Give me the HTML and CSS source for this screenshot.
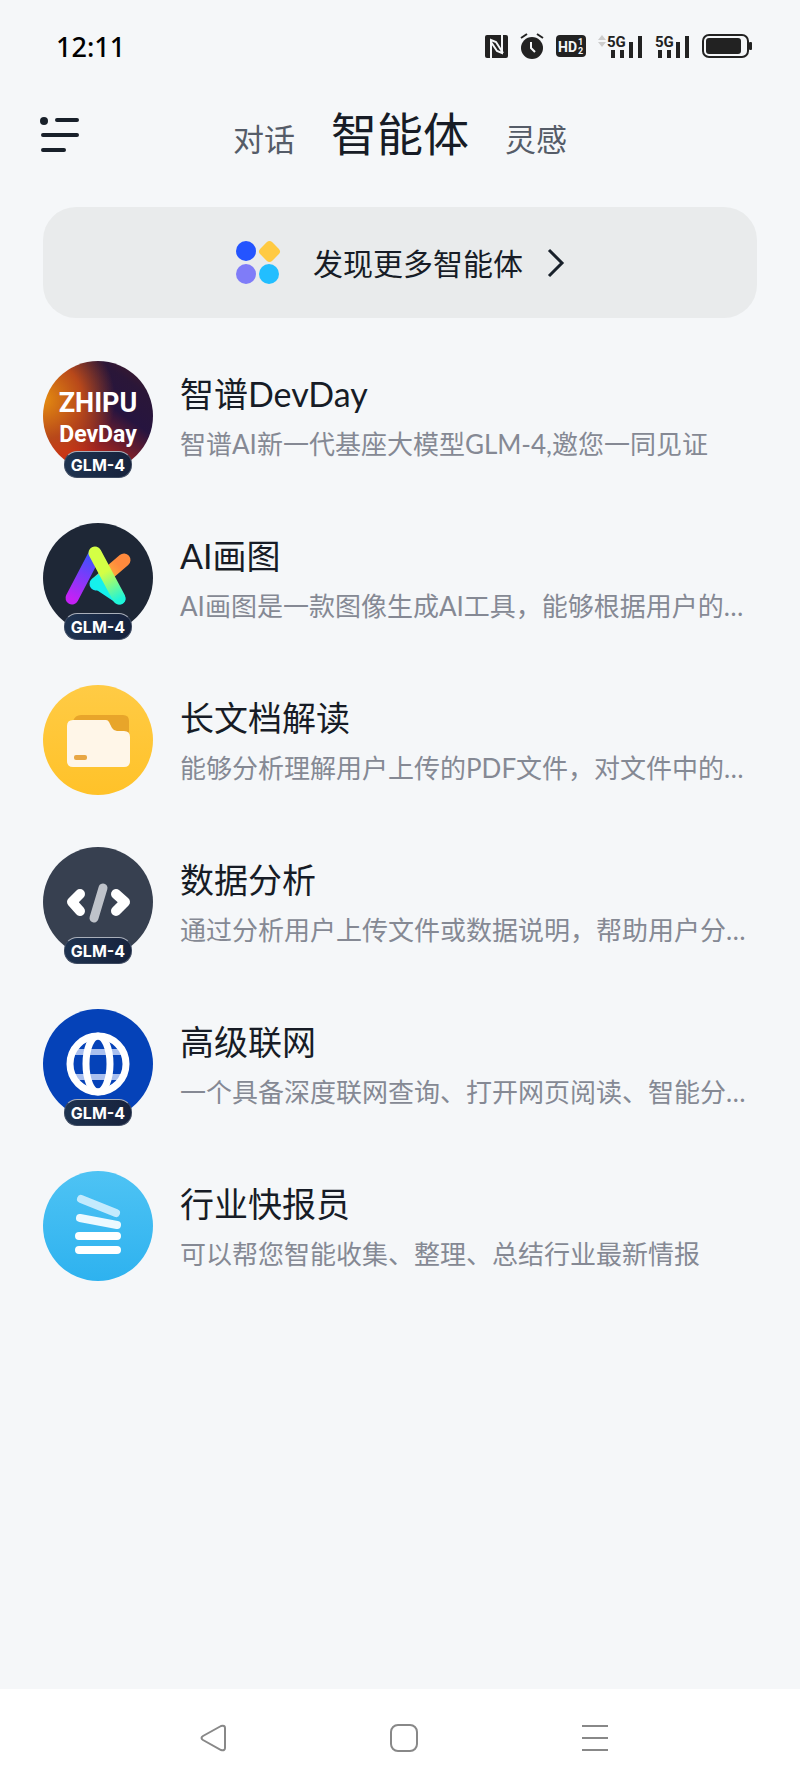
FILE: index.html
```html
<!DOCTYPE html>
<html lang="zh-CN">
  <head>
    <meta charset="utf-8" />
    <meta name="viewport" content="width=device-width, initial-scale=1" />
    <title>智能体</title>
    <link rel="stylesheet" href="styles.css" />
  </head>
  <body>
    <div class="status">
      <span class="time">12:11</span>
      <div class="status-icons">
        <svg class="nfc" width="23" height="23" viewBox="0 0 23 23">
          <rect width="23" height="23" rx="2" fill="#222" />
          <path d="M6 23V5l5 2 7 11M17 0v18l-5-2L6 7" fill="none" stroke="#f5f7f9" stroke-width="2" />
        </svg>
        <svg class="alarm" width="24" height="26" viewBox="0 0 24 26">
          <circle cx="12" cy="15" r="11" fill="#222" />
          <path d="M1 5l6-4M23 5l-6-4" stroke="#222" stroke-width="2" />
          <path d="M11 9v6l4 4" fill="none" stroke="#f5f7f9" stroke-width="2" />
        </svg>
        <svg class="hd" width="30" height="22" viewBox="0 0 30 22">
          <rect width="30" height="22" rx="4" fill="#222" />
          <text x="2" y="17" font-size="14">HD</text>
          <text x="22" y="10" font-size="9">1</text>
          <text x="22" y="19" font-size="9">2</text>
        </svg>
        <svg class="signal-data" width="45" height="27" viewBox="0 0 45 27">
          <path d="M0 7l4-5 4 5zM0 9l4 5 4-5z" fill="#ccc" />
          <text x="9" y="14" font-size="15">5G</text>
          <path d="M15 17v8M24 17v8M33 9v16M42 3v22" />
        </svg>
        <svg class="signal" width="35" height="27" viewBox="0 0 35 27">
          <text x="0" y="14" font-size="15">5G</text>
          <path d="M5 17v8M14 17v8M23 9v16M32 3v22" />
        </svg>
        <svg class="battery" width="50" height="24" viewBox="0 0 50 24">
          <rect x="1" y="1" width="45" height="22" rx="6" fill="none" stroke="#222" stroke-width="2" />
          <rect x="4" y="4" width="35" height="16" rx="3" fill="#222" />
          <rect x="47" y="8" width="3" height="8" rx="1" fill="#222" />
        </svg>
      </div>
    </div>

    <header class="header">
      <button class="menu" aria-label="菜单">
        <svg width="39" height="37" viewBox="0 0 39 37">
          <circle cx="4" cy="5" r="4" fill="#18202a" />
          <path d="M17 4h20M3 19h34M3 34h21" stroke="#18202a" stroke-width="4" stroke-linecap="round" />
        </svg>
      </button>
      <nav class="tabs">
        <a href="#chat">对话</a>
        <a href="#agents" class="active">智能体</a>
        <a href="#ideas">灵感</a>
      </nav>
    </header>

    <main class="main">
      <button class="more">
        <svg width="46" height="46" viewBox="0 0 46 46">
          <circle cx="11" cy="11" r="10" fill="#2454ff" />
          <rect x="26" y="3" width="17" height="17" rx="4" fill="#ffca42" transform="rotate(45 34.500 11.500)" />
          <circle cx="11" cy="34" r="10" fill="#7f7cf8" />
          <circle cx="34" cy="34" r="10" fill="#22beff" />
        </svg>
        <span>发现更多智能体</span>
        <svg width="18" height="30" viewBox="0 0 18 30">
          <path d="M2 2l13 13L2 28" fill="none" stroke="#18202a" stroke-width="3" />
        </svg>
      </button>

      <ul class="list">
        <li class="item">
          <div class="avatar devday">
            <span class="zhipu">ZHIPU</span>
            <span class="day">DevDay</span>
            <span class="badge">GLM-4</span>
          </div>
          <div class="info">
            <h2>智谱DevDay</h2>
            <p>智谱AI新一代基座大模型GLM-4,邀您一同见证</p>
          </div>
        </li>
        <li class="item">
          <div class="avatar draw">
            <svg width="110" height="110" viewBox="0 0 110 110">
              <defs>
                <linearGradient id="purple" gradientUnits="userSpaceOnUse" x1="29" y1="76" x2="52" y2="31">
                  <stop offset="0" stop-color="#c421f5" />
                  <stop offset="1" stop-color="#3455ff" />
                </linearGradient>
                <linearGradient id="lime" gradientUnits="userSpaceOnUse" x1="52" y1="31" x2="77" y2="76">
                  <stop offset="0.400" stop-color="#d4ff45" />
                  <stop offset="1" stop-color="#20f5d8" />
                </linearGradient>
                <linearGradient id="orange" gradientUnits="userSpaceOnUse" x1="82" y1="37" x2="52" y2="62">
                  <stop offset="0.200" stop-color="#ff8a3d" />
                  <stop offset="0.600" stop-color="#ffb03a" />
                  <stop offset="1" stop-color="#15eaf5" />
                </linearGradient>
              </defs>
              <g fill="none" stroke-width="13" stroke-linecap="round" stroke-linejoin="round">
                <path d="M29 75L52 31" stroke="url(#purple)" />
                <path d="M81 37L53 61" stroke="url(#orange)" />
                <path d="M53 60L77 76L62 53z" stroke="#15f0ec" fill="#15f0ec" stroke-width="11" />
                <path d="M52 30L76 75" stroke="url(#lime)" />
              </g>
            </svg>
            <span class="badge">GLM-4</span>
          </div>
          <div class="info">
            <h2>AI画图</h2>
            <p>AI画图是一款图像生成AI工具，能够根据用户的…</p>
          </div>
        </li>
        <li class="item">
          <div class="avatar docs">
            <svg width="110" height="110" viewBox="0 0 110 110">
              <path d="M30 36q2-6 8-6h42q6 0 6 6v20H30z" fill="#e8a52a" />
              <path d="M30 35h33q2 0 3 2l3 6q2 3 5 3h7q6 0 6 6v24q0 6-6 6H30q-6 0-6-6V41q0-6 6-6z" fill="#fff6e8" />
              <rect x="31" y="70" width="13" height="5" rx="2" fill="#e8a745" />
            </svg>
          </div>
          <div class="info">
            <h2>长文档解读</h2>
            <p>能够分析理解用户上传的PDF文件，对文件中的…</p>
          </div>
        </li>
        <li class="item">
          <div class="avatar code">
            <svg width="110" height="110" viewBox="0 0 110 110">
              <g fill="none" stroke-linecap="round" stroke-linejoin="round">
                <path d="M37 47L29 55l8 9M73 47l9 8-9 9" stroke="#fff" stroke-width="10" />
                <path d="M60 41L51 71" stroke="#bfc3ca" stroke-width="9" />
              </g>
            </svg>
            <span class="badge">GLM-4</span>
          </div>
          <div class="info">
            <h2>数据分析</h2>
            <p>通过分析用户上传文件或数据说明，帮助用户分…</p>
          </div>
        </li>
        <li class="item">
          <div class="avatar web">
            <svg width="110" height="110" viewBox="0 0 110 110">
              <path d="M30 43h50M30 68h50" stroke="#a9bfee" stroke-width="6" />
              <g fill="none" stroke="#fff" stroke-width="7">
                <circle cx="55" cy="55" r="28" />
                <ellipse cx="55" cy="55" rx="12" ry="28" />
              </g>
            </svg>
            <span class="badge">GLM-4</span>
          </div>
          <div class="info">
            <h2>高级联网</h2>
            <p>一个具备深度联网查询、打开网页阅读、智能分…</p>
          </div>
        </li>
        <li class="item">
          <div class="avatar news">
            <svg width="110" height="110" viewBox="0 0 110 110">
              <g stroke="#fff" stroke-width="8" stroke-linecap="round">
                <path d="M38 28L73 42" stroke="#c3eafd" />
                <path d="M37 47L74 54" stroke="#ecf9ff" />
                <path d="M36 65h38M36 79h38" />
              </g>
            </svg>
          </div>
          <div class="info">
            <h2>行业快报员</h2>
            <p>可以帮您智能收集、整理、总结行业最新情报</p>
          </div>
        </li>
      </ul>
    </main>

    <footer class="navbar">
      <button aria-label="返回">
        <svg width="28" height="28" viewBox="0 0 28 28">
          <path d="M22 2L4 12q-3 2 0 4l18 10q4 1 4-2V4q0-3-4-2z" />
        </svg>
      </button>
      <button aria-label="主页">
        <svg width="28" height="28" viewBox="0 0 28 28">
          <rect x="1" y="1" width="26" height="26" rx="7" />
        </svg>
      </button>
      <button aria-label="最近任务">
        <svg width="28" height="28" viewBox="0 0 28 28">
          <path d="M1 2h26M1 14h26M1 26h26" />
        </svg>
      </button>
    </footer>
  </body>
</html>
```

FILE: styles.css
```css
* {
  margin: 0;
  padding: 0;
  box-sizing: border-box;
}
body {
  min-height: 100vh;
  display: flex;
  flex-direction: column;
  background-color: #f5f7f9;
  color: #171c26;
  font-family: Lato, "Noto Sans CJK SC", sans-serif;
}
button {
  border: none;
  background: none;
  font: inherit;
  color: inherit;
  cursor: pointer;
}
svg {
  display: block;
}

.status {
  height: 92px;
  padding: 0 48px 0 56px;
  display: flex;
  justify-content: space-between;
  align-items: center;
}
.time {
  font-family: "Noto Sans", sans-serif;
  font-size: 27px;
  font-weight: 500;
  color: #000;
}
.status-icons {
  display: flex;
  align-items: center;
  gap: 12px;
}
.status-icons text {
  font-family: Roboto, sans-serif;
  font-weight: 700;
  fill: #222;
}
.status-icons .hd text {
  fill: #f5f7f9;
}
.signal path,
.signal-data path:last-child {
  stroke: #222;
  stroke-width: 4;
}

.header {
  height: 84px;
  padding: 0 40px;
  display: grid;
  grid-template-columns: 40px 1fr 40px;
  align-items: center;
}
.tabs {
  padding-bottom: 6px;
  display: flex;
  justify-content: center;
  align-items: baseline;
  gap: 36px;
}
.tabs a {
  font-size: 31px;
  color: #555c68;
  text-decoration: none;
}
.tabs .active {
  font-size: 46px;
  color: #171c26;
}

.main {
  flex: 1;
  padding: 31px 43px;
}
.more {
  width: 100%;
  height: 111px;
  border-radius: 33px;
  background-color: #e9ebec;
  display: flex;
  justify-content: center;
  align-items: center;
  font-size: 30px;
}
.more span {
  margin: 0 24px 0 32px;
  padding-bottom: 2px;
}

.list {
  list-style: none;
  margin-top: 43px;
  display: grid;
  gap: 52px;
}
.item {
  display: flex;
  align-items: center;
  gap: 27px;
}
.avatar {
  position: relative;
  flex: none;
  width: 110px;
  height: 110px;
  border-radius: 50%;
}
.devday {
  display: flex;
  flex-direction: column;
  align-items: center;
  padding-top: 26px;
  background: radial-gradient(circle at 0% 35%, #e58c10 0, #b8481a 30%, transparent 55%),
    linear-gradient(35deg, #d42a12 20%, #26143f 60%, #2a1638 80%, #4a1c24);
  color: #fff;
  font-family: Roboto, sans-serif;
  font-weight: 700;
}
.zhipu {
  font-size: 27px;
  line-height: 32px;
}
.day {
  font-size: 23px;
  line-height: 32px;
}
.draw {
  background-color: #1e2736;
}
.docs {
  background: linear-gradient(#ffcb45, #ffc229);
}
.code {
  background-color: #374050;
}
.web {
  background-color: #0542b8;
}
.news {
  background: linear-gradient(#4ec3f4, #2eb2ef);
}
.badge {
  position: absolute;
  left: 21px;
  top: 90px;
  width: 68px;
  height: 27px;
  border: 1px solid #3c4960;
  border-top-color: #a9afba;
  border-radius: 13px;
  background: linear-gradient(90deg, #1e3350, #17223c);
  color: #fff;
  font-family: Inter, sans-serif;
  font-size: 16px;
  font-weight: 700;
  line-height: 26px;
  text-align: center;
}
.info {
  flex: 1;
  min-width: 0;
  padding-top: 2px;
}
.info h2 {
  font-size: 34px;
  font-weight: 400;
  line-height: 44px;
}
.info p {
  margin-top: 10px;
  font-size: 26px;
  line-height: 36px;
  color: #858994;
  white-space: nowrap;
}

.navbar {
  height: 98px;
  padding-left: 8px;
  background-color: #fff;
  display: flex;
  justify-content: center;
  align-items: center;
  gap: 163px;
}
.navbar svg {
  fill: none;
  stroke: #888;
  stroke-width: 2;
}
```
